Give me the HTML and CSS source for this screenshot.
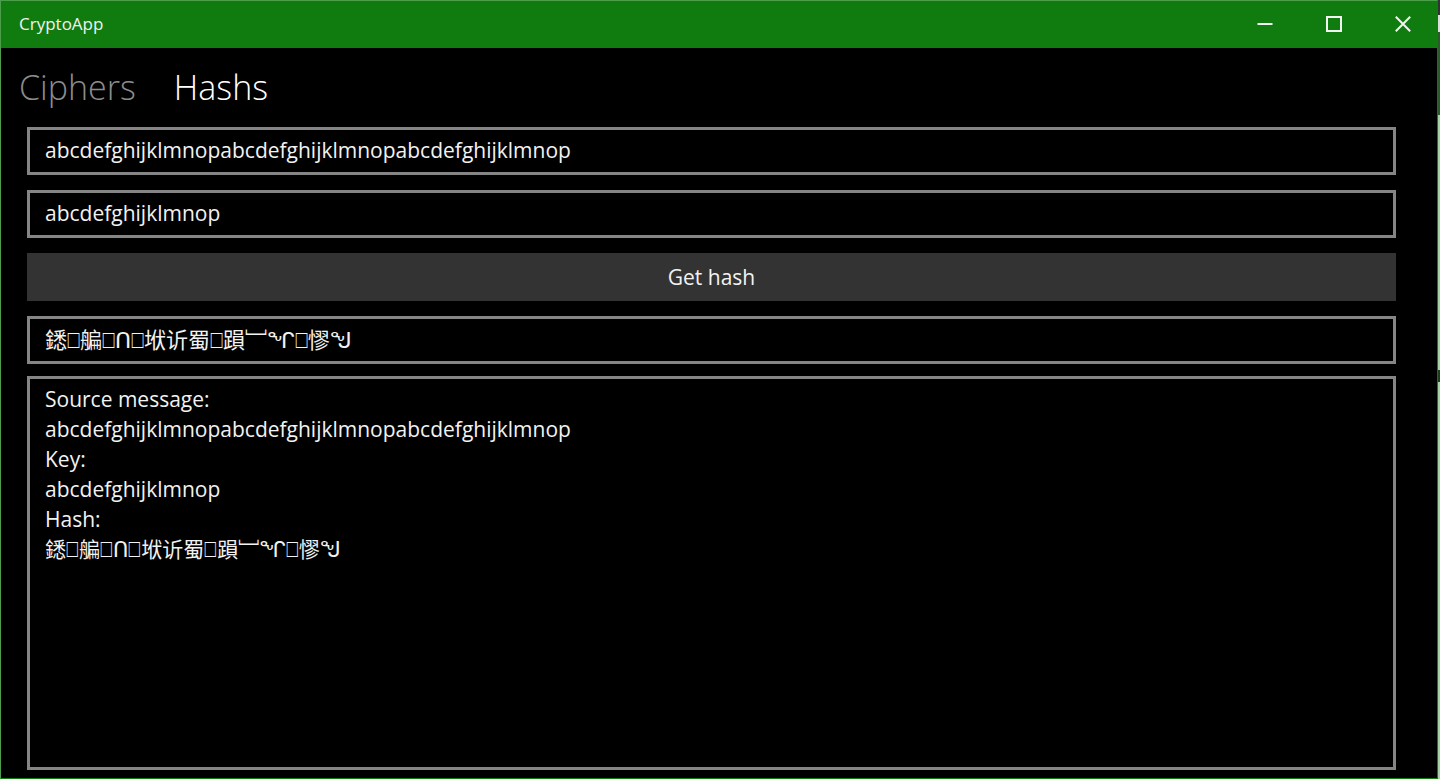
FILE: index.html
```html
<!DOCTYPE html>
<html lang="en">
<head>
<meta charset="utf-8">
<title>CryptoApp</title>
<link rel="stylesheet" href="styles.css">
</head>
<body>
<div class="window">
  <header class="titlebar">
    <h1 class="title">CryptoApp</h1>
    <div class="controls">
      <button class="control" type="button" aria-label="Minimize"><svg viewBox="0 0 16 16" width="16" height="16"><path d="M0.5 8H15.5"/></svg></button>
      <button class="control" type="button" aria-label="Maximize"><svg viewBox="0 0 16 16" width="16" height="16"><path d="M1 1H15V15H1Z"/></svg></button>
      <button class="control" type="button" aria-label="Close"><svg viewBox="0 0 16 16" width="16" height="16"><path d="M0.8 0.8L15.2 15.2M15.2 0.8L0.8 15.2"/></svg></button>
    </div>
  </header>
  <nav class="tabs">
    <a class="tab" href="#ciphers">Ciphers</a>
    <a class="tab active" href="#hashs">Hashs</a>
  </nav>
  <main class="form">
    <input class="field" type="text" aria-label="Source message" value="abcdefghijklmnopabcdefghijklmnopabcdefghijklmnop">
    <input class="field" type="text" aria-label="Key" value="abcdefghijklmnop">
    <button class="submit" type="button">Get hash</button>
    <input class="field hash" type="text" aria-label="Hash" value="鏭⎕艑⎕ᑎ⎕垘䜣蜀⎕䠝﹈ᖏ⎕憀ᖑ">
    <textarea class="field log" aria-label="Log">Source message:
abcdefghijklmnopabcdefghijklmnopabcdefghijklmnop
Key:
abcdefghijklmnop
Hash:
鏭⎕艑⎕ᑎ⎕垘䜣蜀⎕䠝﹈ᖏ⎕憀ᖑ</textarea>
  </main>
</div>
</body>
</html>
```

FILE: styles.css
```css
* {
  box-sizing: border-box;
}

body {
  margin: 0;
  padding-right: 2px;
  background: linear-gradient(#333 15px, #ddd 15px 32px, #2b5b2b 32px 115px, #a5d3a5 115px 370px, #1d3d1d 370px 382px, #a5d3a5 382px);
  color: #f2f2f2;
  font-family: "Open Sans", "Noto Sans CJK SC", "DejaVu Sans", sans-serif;
}

.window {
  display: flex;
  flex-direction: column;
  min-height: 100vh;
  border: 1px solid #107c10;
  border-top-color: #4c9e4c;
  border-left-color: #4c9e4c;
  background: #000;
}

.titlebar {
  display: flex;
  justify-content: space-between;
  height: 47px;
  background: #107c10;
}

.title {
  margin: 0;
  padding-left: 18px;
  font-size: 17px;
  font-weight: 500;
  line-height: 46px;
}

.controls {
  display: flex;
}

.control {
  display: grid;
  place-items: center;
  width: 69px;
  padding: 0 0 2px;
  border: 0;
  background: none;
}

.control svg {
  fill: none;
  stroke: #f2f2f2;
  stroke-width: 2;
}

.tabs {
  display: flex;
  gap: 38px;
  padding: 13px 18px;
}

.tab {
  color: #8c8c8c;
  font-size: 34px;
  font-weight: 300;
  line-height: 52px;
  text-decoration: none;
}

.tab.active {
  color: #fff;
}

.form {
  display: flex;
  flex: 1;
  flex-direction: column;
  gap: 15px;
  padding: 1px 41px 8px 26px;
}

.field {
  display: block;
  width: 100%;
  height: 48px;
  margin: 0;
  padding: 0 15px 2px;
  border: 3px solid #858585;
  border-radius: 0;
  background: #000;
  color: #f2f2f2;
  font: inherit;
  font-size: 21px;
  line-height: 30px;
}

.hash {
  padding-bottom: 4px;
  font-size: 22px;
}

.submit {
  height: 48px;
  border: 0;
  background: #333;
  color: #f2f2f2;
  font: inherit;
  font-size: 21px;
}

.log {
  flex: 1;
  margin-top: -3px;
  padding-top: 5px;
  resize: none;
}
```
